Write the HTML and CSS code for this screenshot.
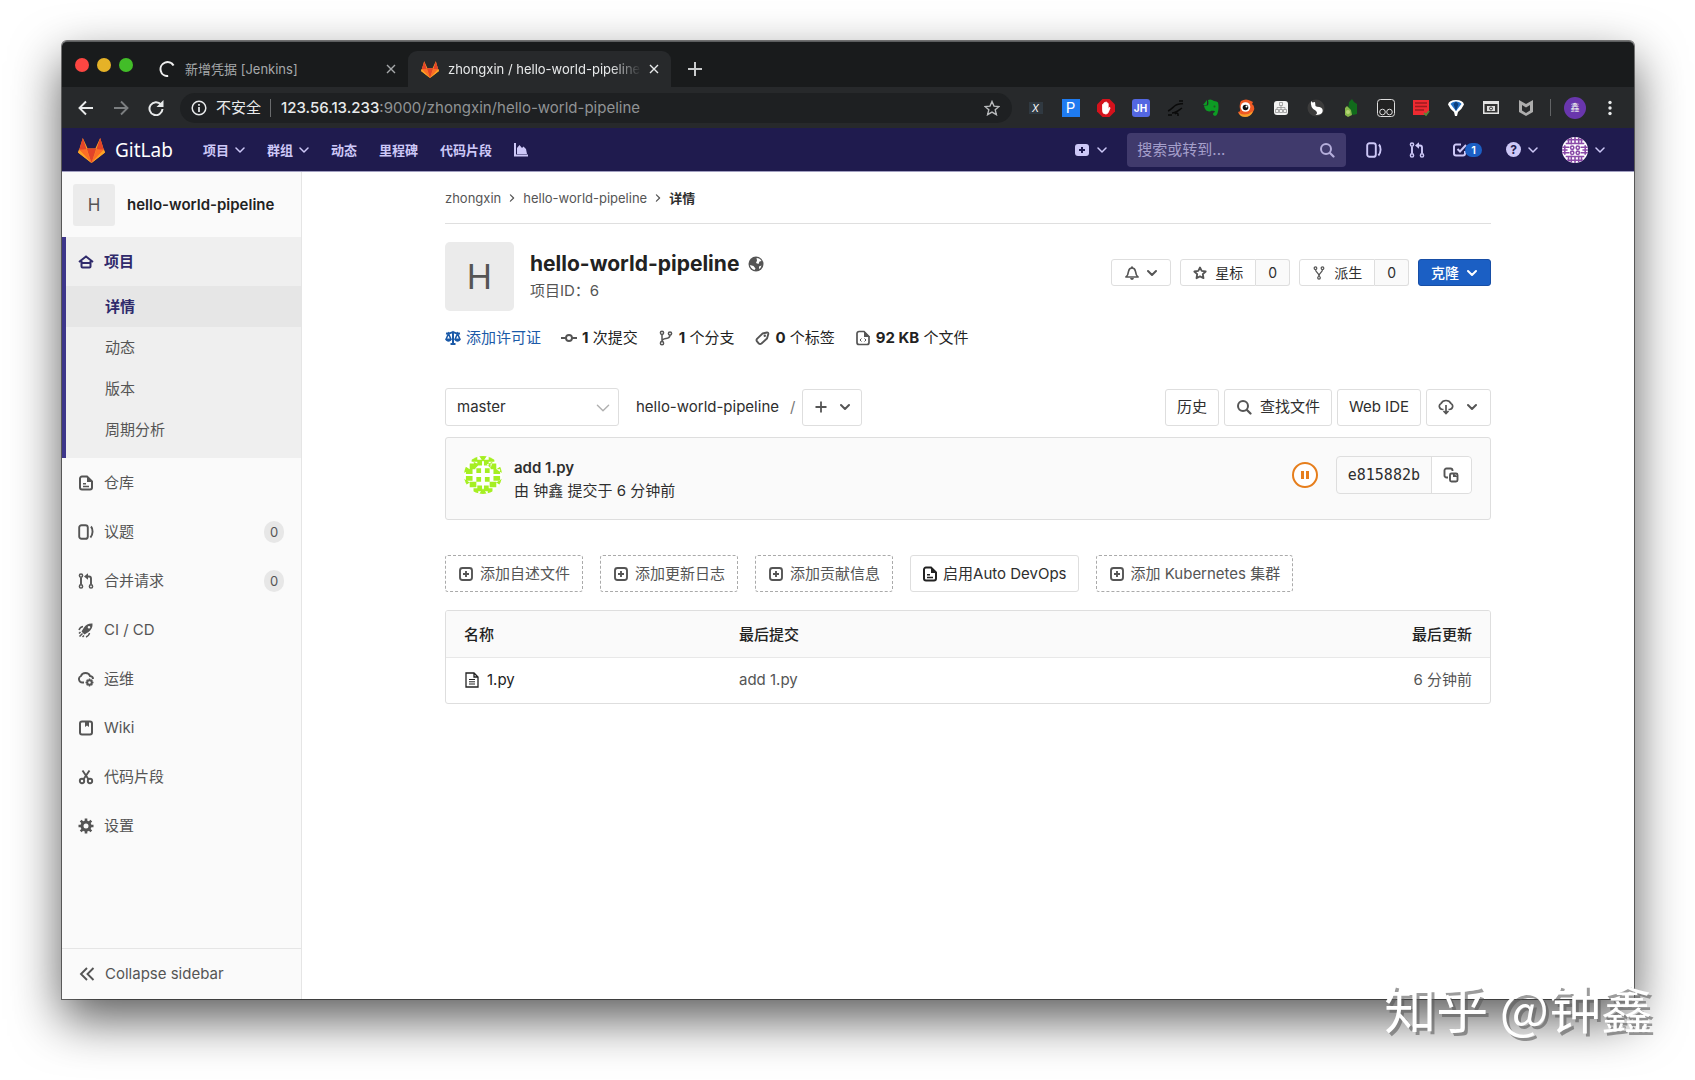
FILE: index.html
```html
<!DOCTYPE html>
<html lang="zh-CN">
<head>
    <meta charset="UTF-8">
    <meta name="viewport" content="width=device-width, initial-scale=1.0">
    <title>zhongxin / hello-world-pipeline</title>
    <link rel="stylesheet" href="styles.css">
</head>
<body>

<!-- Shared icons -->
<svg class="sprite" aria-hidden="true">
    <symbol id="chevron" viewBox="0 0 10 10"><path d="M1 3l4 4 4-4" fill="none" stroke="currentColor" stroke-linecap="round" stroke-linejoin="round"/></symbol>
    <symbol id="close" viewBox="0 0 10 10"><path d="M1 1l8 8M9 1l-8 8" fill="none" stroke="currentColor" stroke-width="1.4"/></symbol>
    <symbol id="tanuki" viewBox="0 0 28 28">
        <path d="M1 15L5 2l5 11h8l5-11 4 13 1 2-14 11L0 17z" fill="#fca326"/>
        <path d="M1 15L5 2l4 12zM27 15L23 2l-4 12z" fill="#e24329"/>
        <path d="M1 14h8l5 14zM27 14h-8l-5 14z" fill="#fc6d26"/>
        <path d="M0 17l1-3 13 14zM28 17l-1-3-13 14z" fill="#fca326"/>
        <path d="M9 13h10l-5 15z" fill="#e24329"/>
    </symbol>
    <symbol id="issues" viewBox="0 0 16 16"><rect x="1.2" y="1.2" width="8.600" height="13.600" rx="2.400" fill="none" stroke="currentColor" stroke-width="1.900"/><path d="M13 2.500c2.200 2.500 2.200 8-.6 11" fill="none" stroke="currentColor" stroke-width="1.900"/></symbol>
    <symbol id="merge" viewBox="0 0 16 16"><g fill="none" stroke="currentColor" stroke-width="1.5"><circle cx="3" cy="2.600" r="1.600"/><circle cx="3" cy="13.400" r="1.600"/><circle cx="13" cy="13.400" r="1.600"/></g><path d="M3 4.500v7M13 11.500V5.500q0-2-2-2H8" fill="none" stroke="currentColor" stroke-width="1.900"/><path d="M6 3.500L10 .3v6.400z" fill="currentColor"/></symbol>
    <symbol id="doc" viewBox="0 0 16 16"><path d="M4 1.500h5l5 5V12.500a2 2 0 0 1-2 2H4a2 2 0 0 1-2-2v-9a2 2 0 0 1 2-2z" fill="none" stroke="currentColor" stroke-width="2"/><path d="M9 1l6 6H9zM5 8h3v1.400H5zM5 10.800h6v1.400H5z" fill="currentColor"/></symbol>
    <symbol id="plus-square" viewBox="0 0 16 16"><rect x="2" y="2" width="12" height="12" rx="2.500" fill="none" stroke="currentColor" stroke-width="1.900"/><path d="M8 5v6M5 8h6" stroke="currentColor" stroke-width="1.900"/></symbol>
    <symbol id="search" viewBox="0 0 16 16"><circle cx="7" cy="7" r="5" fill="none" stroke="currentColor" stroke-width="2"/><path d="M11 11l3.500 3.500" stroke="currentColor" stroke-width="2.200" stroke-linecap="round"/></symbol>
    <symbol id="scissors" viewBox="0 0 16 16"><g fill="none" stroke="currentColor" stroke-width="1.900"><circle cx="4" cy="12" r="2.200"/><circle cx="12" cy="12" r="2.200"/><path d="M4.500 1.500l6 8.800M11.500 1.500l-6 8.800"/></g></symbol>
    <symbol id="fork" viewBox="0 0 16 16"><g fill="none" stroke="currentColor" stroke-width="1.400"><circle cx="4" cy="2.500" r="1.500"/><circle cx="12" cy="2.500" r="1.500"/><circle cx="8" cy="13.500" r="1.500"/><path d="M4 4c0 4 4 3 4 8M12 4c0 4-4 3-4 8"/></g></symbol>
    <symbol id="identicon" viewBox="0 0 40 40">
        <path fill="currentColor" d="M8 0h6v6H8zM16 0l4 6 4-6zM26 0h6v6h-6zM6 8h6v6H6zM14 4h5v6h-5zM21 4h5v6h-5zM28 8h6v6h-6zM0 10l6 4-6 4zM40 10l-6 4 6 4zM2 14h7v5H2zM31 14h7v5h-7zM2 21h7v5H2zM31 21h7v5h-7zM0 24l6 4-6 4zM40 24l-6 4 6 4zM6 27h7v6H6zM27 27h7v6h-7zM14 31h5v6h-5zM21 31h5v6h-5zM10 34h5v6h-5zM25 34h5v6h-5zM16 40l4-6 4 6zM10 6l6 3-4 4zM30 6l-6 3 4 4zM13 13h5v5h-5zM22 13h5v5h-5zM13 22h5v5h-5zM22 22h5v5h-5z"/>
    </symbol>
    <symbol id="identicon-user" viewBox="0 0 28 28">
        <g fill="none" stroke="currentColor" stroke-width="1.700">
            <path d="M7 1v6M10 0v8M14 0v7M18 0v8M21 1v6M5 3h18M4 7h20M7 21v6M10 20v8M14 21v7M18 20v8M21 21v6M5 25h18M4 21h20M3 9v10M0 11h8M0 14h6M0 17h8M25 9v10M20 11h8M22 14h6M20 17h8"/>
            <circle cx="11" cy="11.500" r="1.800"/><circle cx="17" cy="11.500" r="1.800"/><circle cx="11" cy="17" r="1.800"/><circle cx="17" cy="17" r="1.800"/>
        </g>
    </symbol>
</svg>

<div class="window">

    <!-- Browser tabs -->
    <div class="tabs">
        <div class="lights"><i class="red"></i><i class="yellow"></i><i class="green"></i></div>
        <div class="tab">
            <svg class="i16" viewBox="0 0 16 16"><path d="M11.500 14.200A7 7 0 1 1 13 2.500" transform="rotate(20 8 8)" fill="none" stroke="#eee" stroke-width="2"/></svg>
            <span class="tab-title">新增凭据 [Jenkins]</span>
            <button class="tab-close" aria-label="关闭"><svg class="i10"><use href="#close"/></svg></button>
        </div>
        <div class="tab active">
            <svg class="i18"><use href="#tanuki"/></svg>
            <span class="tab-title">zhongxin / hello-world-pipeline</span>
            <button class="tab-close" aria-label="关闭"><svg class="i10"><use href="#close"/></svg></button>
        </div>
        <button class="new-tab" aria-label="新标签页"><svg class="i14" viewBox="0 0 14 14"><path d="M7 0v14M0 7h14" stroke="currentColor" stroke-width="2"/></svg></button>
    </div>

    <!-- Address bar -->
    <div class="toolbar">
        <div class="history">
            <button aria-label="后退"><svg class="i16" viewBox="0 0 16 16"><path d="M15 8H2M8 1.500L1.500 8 8 14.500" fill="none" stroke="currentColor" stroke-width="1.900"/></svg></button>
            <button class="disabled" aria-label="前进"><svg class="i16" viewBox="0 0 16 16"><path d="M1 8h13M8 1.500L14.500 8 8 14.500" fill="none" stroke="currentColor" stroke-width="1.900"/></svg></button>
            <button aria-label="重新加载"><svg class="i16" viewBox="0 0 16 16"><path d="M13 4.500A6.500 6.500 0 1 0 14.500 9" fill="none" stroke="currentColor" stroke-width="2"/><path d="M15.500 0v7h-7z" fill="currentColor"/></svg></button>
        </div>
        <div class="omnibox">
            <svg class="i16" viewBox="0 0 16 16"><circle cx="8" cy="8" r="6.800" fill="none" stroke="currentColor" stroke-width="1.500"/><path d="M8 7v5M8 4v1.700" stroke="currentColor" stroke-width="1.700"/></svg>
            <span class="insecure">不安全</span>
            <span class="url"><b>123.56.13.233</b>:9000/zhongxin/hello-world-pipeline</span>
            <svg class="i16 bookmark" viewBox="0 0 16 16"><path d="M8 1.500l2 4.600 5 .4-3.800 3.300 1.200 4.900L8 12.100l-4.400 2.600 1.200-4.900L1 6.500l5-.4z" fill="none" stroke="currentColor" stroke-width="1.400"/></svg>
        </div>
        <div class="extensions">
            <span class="ext"><i class="ext-x">X</i></span>
            <span class="ext"><i class="ext-p">P</i></span>
            <span class="ext"><svg class="i18" viewBox="0 0 18 18"><path d="M5.500 0h7L18 5.500v7L12.500 18h-7L0 12.500v-7z" fill="#d4121c"/><path d="M5.500 8V5.500q.8-.8 1.300 0V4q.8-.9 1.500 0v-.700q.8-.8 1.500 0V4.500q.8-.8 1.400 0V9.500l1-1q1-.3.800.7l-1.700 4q-.7 1.800-2.500 1.800-3.300 0-3.300-3.500z" fill="#fff" stroke="#fff" stroke-width=".8"/></svg></span>
            <span class="ext"><i class="ext-jh">JH</i></span>
            <span class="ext"><svg class="i18" viewBox="0 0 18 18"><path d="M1 12c3-1 5-4 8-6 3-1.500 5-1 7-1.500M5 14c4 0 7-3 10-5M12 2h4M1 16h4M8 15q2-2 3 0v2" fill="none" stroke="#0a0a0a" stroke-width="1.500"/></svg></span>
            <span class="ext"><svg class="i18" viewBox="0 0 18 18"><path d="M1 6l4-5v4q0 1-1 1zM6 1q3-1.500 6 1 3 0 4 1.500c1 4 .5 9-1 12-1 2-4 1.500-4-.5 0-1.500 2-2 2-2 .2-1.500-2-.5-3-1.500-3 2-7 1-8-5h3.500Q7 6 6 1z" fill="#0d9b24"/><circle cx="12.500" cy="7.500" r="1" fill="#245427"/></svg></span>
            <span class="ext"><svg class="i18" viewBox="0 0 18 18"><path d="M4 2q5-3 10 0l2 1-1 2q3 2 2 6-3 7-9 6-6 0-7-4 3 0 2-3-1-5 1-8z" fill="#ef5a24"/><circle cx="8.500" cy="8" r="4.800" fill="#fff"/><circle cx="8.500" cy="8.500" r="2.800" fill="#111"/><circle cx="9.500" cy="7.500" r="1" fill="#fff"/><path d="M2 14q7 4 14-2-2 6-8 6-5 0-6-4z" fill="#f7a02a"/></svg></span>
            <span class="ext"><svg class="i14" viewBox="0 0 14 14"><rect width="14" height="14" rx="3" fill="#f2f2f2"/><path d="M5.500 1.500h3v3h-3zM7 4.500v4M3 8.500V6.500h8v2M1.500 8.500h3v3h-3zM5.500 8.500h3v3h-3zM9.500 8.500h3v3h-3z" fill="none" stroke="#888" stroke-width=".7"/></svg></span>
            <span class="ext"><svg class="i18" viewBox="0 0 18 18"><circle cx="9" cy="9" r="8.500" fill="#3c3c3c"/><path d="M4 2l1.500 1.500L8 3l.5 4q1 1 4 1 4 1 3 5-1 3-7 3 3-2 0-4.500Q3 9 4 2z" fill="#fff"/></svg></span>
            <span class="ext"><svg class="i18" viewBox="0 0 18 18"><path d="M7 3l3-3 2 3 3 2v10l-4 1-5-5z" fill="#116b1c"/><path d="M3 9l2-2 4 4 1 5-4 2-3-2z" fill="#86b84b"/><circle cx="6" cy="13" r="2" fill="#b7d576"/></svg></span>
            <span class="ext"><svg class="i18" viewBox="0 0 18 18"><rect x=".5" y=".5" width="17" height="17" rx="3" fill="#222" stroke="#ddd"/><circle cx="5.500" cy="13" r="2.800" fill="none" stroke="#ddd"/><circle cx="12.500" cy="13" r="2.800" fill="none" stroke="#ddd"/></svg></span>
            <span class="ext"><svg class="i18" viewBox="0 0 18 18"><path d="M1 1h16v11l-4 4H1z" fill="#ee2a31"/><path d="M3 4h12M3 7.500h12M3 11h9" stroke="#9c1b1f" stroke-width="1.300"/><path d="M12 14l2 2 3-4" fill="none" stroke="#59883a" stroke-width="1.800"/></svg></span>
            <span class="ext"><svg class="i18" viewBox="0 0 18 18"><path d="M9 1q7 0 8 4.500Q15 10 11 13l-1 4H8l-1-4Q3 10 1 5.500 2 1 9 1z" fill="#fff"/><path d="M9 2.500q4 0 5.500 2.500L9 12 3.500 5Q5 2.500 9 2.500z" fill="#2373c9"/><path d="M9 2.500L6.500 5 9 12l2.500-7z" fill="#0c3f7c"/></svg></span>
            <span class="ext"><svg class="i16" viewBox="0 0 16 16"><path d="M0 1h16v13H0z" fill="#e3e3e3"/><path d="M1.500 4h13v8.500h-13z" fill="#333"/><path d="M4 6h8v5H4z" fill="#ddd"/><circle cx="8" cy="8.500" r="1.500" fill="none" stroke="#333"/></svg></span>
            <span class="ext"><svg class="i18" viewBox="0 0 18 18"><path d="M2 1l7 4 7-4v12l-7 4-7-4zM5 6v5.500L9 14l4-2.500V6L9 8.500z" fill="#adadad" fill-rule="evenodd"/></svg></span>
        </div>
        <span class="divider"></span>
        <span class="profile">鑫</span>
        <button class="menu" aria-label="菜单"><svg class="i16" viewBox="0 0 16 16"><circle cx="8" cy="2.500" r="1.700"/><circle cx="8" cy="8" r="1.700"/><circle cx="8" cy="13.500" r="1.700"/></svg></button>
    </div>

    <!-- GitLab header -->
    <header>
        <a class="brand" href="#"><svg class="i26"><use href="#tanuki"/></svg>GitLab</a>
        <nav class="main-nav">
            <a href="#">项目<svg class="i10"><use href="#chevron"/></svg></a>
            <a href="#">群组<svg class="i10"><use href="#chevron"/></svg></a>
            <a href="#">动态</a>
            <a href="#">里程碑</a>
            <a href="#">代码片段</a>
            <a href="#" aria-label="统计"><svg class="i14" viewBox="0 0 14 14"><path d="M1 0v12.500h13" fill="none" stroke="currentColor" stroke-width="2"/><path d="M3 11V5l2.500-3L8 5l1.500-1.500L12 6l1 5z" fill="currentColor"/></svg></a>
        </nav>
        <div class="tools">
            <a class="new-item" href="#" aria-label="新建"><svg class="i14" viewBox="0 0 14 14"><rect y="1" width="14" height="12" rx="3" fill="currentColor"/><path d="M7 4v6M4 7h6" stroke="#1f1b4e" stroke-width="2"/></svg><svg class="i10"><use href="#chevron"/></svg></a>
            <form class="search">
                <input type="text" placeholder="搜索或转到..." aria-label="搜索或转到">
                <svg class="i16"><use href="#search"/></svg>
            </form>
            <div class="user-tools">
                <a class="shortcut" href="#" aria-label="议题"><svg class="i16"><use href="#issues"/></svg></a>
                <a class="shortcut" href="#" aria-label="合并请求"><svg class="i16"><use href="#merge"/></svg></a>
                <a class="todos" href="#" aria-label="待办事项"><svg class="i16" viewBox="0 0 16 16"><path d="M9 2.500H4a2 2 0 0 0-2 2v7a2 2 0 0 0 2 2h7a2 2 0 0 0 2-2V9" fill="none" stroke="currentColor" stroke-width="2"/><path d="M5.500 7l2.500 2.500 6-6.500" fill="none" stroke="currentColor" stroke-width="2"/></svg><span class="todo-count">1</span></a>
                <a class="help" href="#" aria-label="帮助"><i class="question">?</i><svg class="i10"><use href="#chevron"/></svg></a>
                <a class="user" href="#" aria-label="用户"><svg class="user-avatar"><use href="#identicon-user"/></svg><svg class="i10"><use href="#chevron"/></svg></a>
            </div>
        </div>
    </header>

    <div class="page">
        <aside class="sidebar">
            <a class="context" href="#"><span class="avatar small">H</span>hello-world-pipeline</a>
            <ul class="side-nav">
                <li class="active">
                    <a href="#"><svg class="i16" viewBox="0 0 16 16"><path d="M1 8l7-5.500L15 8M3.500 7v5.500a1 1 0 0 0 1 1h7a1 1 0 0 0 1-1V7M4 9h8" fill="none" stroke="currentColor" stroke-width="2"/></svg>项目</a>
                    <ul class="sub-nav">
                        <li class="current"><a href="#">详情</a></li>
                        <li><a href="#">动态</a></li>
                        <li><a href="#">版本</a></li>
                        <li><a href="#">周期分析</a></li>
                    </ul>
                </li>
                <li><a href="#"><svg class="i16"><use href="#doc"/></svg>仓库</a></li>
                <li><a href="#"><svg class="i16"><use href="#issues"/></svg>议题<span class="count">0</span></a></li>
                <li><a href="#"><svg class="i16"><use href="#merge"/></svg>合并请求<span class="count">0</span></a></li>
                <li><a href="#"><svg class="i16" viewBox="0 0 16 16"><path d="M14.500 1.500Q9 1 6 5.500L3.500 9.500l3 3L10.500 10Q15 7 14.500 1.500zM11 4a1.300 1.300 0 1 1 0 2.600A1.300 1.300 0 0 1 11 4z" fill="currentColor" fill-rule="evenodd"/><path d="M5 4.500Q2 5 1 8M11.500 11Q11 14 8 15M1.500 14.500l3-3M1 11.500L2.500 10M4.500 15L6 13.500" fill="none" stroke="currentColor" stroke-width="1.500"/></svg>CI / CD</a></li>
                <li><a href="#"><svg class="i16" viewBox="0 0 16 16"><path d="M6 11.500H4.500A3.400 3.400 0 0 1 3 5q1-3 4.500-3T12 5q3 .3 3 3" fill="none" stroke="currentColor" stroke-width="1.900"/><circle cx="11.500" cy="11.500" r="2.300" fill="none" stroke="currentColor" stroke-width="2"/><path d="M11.500 7.500v2M11.500 13.500v2M7.500 11.500h2M13.500 11.500h2M8.700 8.700l1.500 1.500M12.800 12.800l1.500 1.500M14.300 8.700l-1.500 1.500M10.200 12.800l-1.500 1.500" stroke="currentColor" stroke-width="1.400"/></svg>运维</a></li>
                <li><a href="#"><svg class="i16" viewBox="0 0 16 16"><rect x="2" y="1.500" width="12" height="13" rx="2" fill="none" stroke="currentColor" stroke-width="2"/><path d="M7 1h4v6L9 5.500 7 7z" fill="currentColor"/></svg>Wiki</a></li>
                <li><a href="#"><svg class="i16"><use href="#scissors"/></svg>代码片段</a></li>
                <li><a href="#"><svg class="i16" viewBox="0 0 16 16"><circle cx="8" cy="8" r="4" fill="none" stroke="currentColor" stroke-width="3"/><path d="M8 .5V4M8 12v3.500M.5 8H4M12 8h3.500M2.700 2.700l2.500 2.500M10.800 10.800l2.500 2.500M13.300 2.700l-2.500 2.500M5.200 10.800l-2.500 2.500" stroke="currentColor" stroke-width="2.600"/></svg>设置</a></li>
            </ul>
            <button class="collapse"><svg class="i16" viewBox="0 0 16 16"><path d="M8 2L2 8l6 6M14.500 2l-6 6 6 6" fill="none" stroke="currentColor" stroke-width="1.900"/></svg>Collapse sidebar</button>
        </aside>

        <main>
            <div class="container">
                <div class="breadcrumbs">
                    <a href="#">zhongxin</a><svg class="crumb"><use href="#chevron"/></svg><a href="#">hello-world-pipeline</a><svg class="crumb"><use href="#chevron"/></svg><b>详情</b>
                </div>

                <div class="project">
                    <span class="avatar large">H</span>
                    <div class="project-info">
                        <h1>hello-world-pipeline <svg class="i16" viewBox="0 0 16 16"><circle cx="8" cy="8" r="7.500" fill="#555"/><path d="M8.500 2q3.500 0 5 3l-2 .5-1 2.500-2.500-1L9 4.500zM2 9l3.500 1 2 2.500L6.500 14Q2.500 12.500 2 9zM11 10.500l2.500-1q-.5 2.500-2.500 3.500z" fill="#fff"/></svg></h1>
                        <p>项目ID：6</p>
                    </div>
                    <div class="project-buttons">
                        <button class="btn short" aria-label="通知设置"><svg class="i14" viewBox="0 0 14 14"><path d="M1 11h12q-2-1.500-2.500-5.500Q10 2 7 2T3.500 5.500Q3 9.500 1 11z" fill="none" stroke="currentColor" stroke-width="1.700" stroke-linejoin="round"/><path d="M6 .5h2V2H6zM5 12h4q-.5 2-2 2t-2-2z" fill="currentColor"/></svg><svg class="i10 bold"><use href="#chevron"/></svg></button>
                        <div class="btn-group">
                            <button class="btn short"><svg class="i14" viewBox="0 0 14 14"><path d="M7 1.500l1.700 3.400 4 .6-2.900 2.700.7 4L7 10.400 3.500 12.200l.7-4L1.300 5.500l4-.6z" fill="none" stroke="currentColor" stroke-width="1.800" stroke-linejoin="round"/></svg>星标</button><a class="btn short num" href="#">0</a>
                        </div>
                        <div class="btn-group">
                            <button class="btn short"><svg class="i14"><use href="#fork"/></svg>派生</button><a class="btn short num" href="#">0</a>
                        </div>
                        <button class="btn short primary">克隆<svg class="i10 bold"><use href="#chevron"/></svg></button>
                    </div>
                </div>

                <ul class="stats">
                    <li><a class="blue" href="#"><svg class="i16" viewBox="0 0 16 16"><path d="M1 3.500q3.500.5 7-1.500 3.500 2 7 1.500M8 2v12M5.500 14h5" fill="none" stroke="currentColor" stroke-width="2"/><path d="M3.500 3.500L1 9.500q2.500 2.500 5 0zM12.500 3.500L10 9.500q2.500 2.500 5 0z" fill="none" stroke="currentColor" stroke-width="1.600"/><path d="M.8 8.500h5.400q-.5 3-2.700 3T.8 8.500zM9.800 8.500h5.400q-.5 3-2.700 3t-2.700-3z" fill="currentColor"/></svg>添加许可证</a></li>
                    <li><a href="#"><svg class="i16" viewBox="0 0 16 16"><circle cx="8" cy="8" r="3" fill="none" stroke="currentColor" stroke-width="1.900"/><path d="M0 8h5M11 8h5" stroke="currentColor" stroke-width="2"/></svg><span><b>1</b> 次提交</span></a></li>
                    <li><a href="#"><svg class="i16" viewBox="0 0 16 16"><g fill="none" stroke="currentColor" stroke-width="1.500"><circle cx="4" cy="2.800" r="1.600"/><circle cx="12" cy="3.500" r="1.600"/><circle cx="4" cy="13.200" r="1.600"/><path d="M4 4.500v7M12 5q0 3-4 3.500-4 .5-4 3"/></g></svg><span><b>1</b> 个分支</span></a></li>
                    <li><a href="#"><svg class="i16" viewBox="0 0 16 16"><path d="M8.500 3.500L13 2.500q1.500 0 1.300 1.500L13 8.500 7.500 13.500q-1.500 1-2.700 0L3 11.500q-1-1.500 0-2.700z" fill="none" stroke="currentColor" stroke-width="1.900"/><circle cx="10.800" cy="5.800" r="1.200" fill="currentColor"/></svg><span><b>0</b> 个标签</span></a></li>
                    <li><a href="#"><svg class="i16" viewBox="0 0 16 16"><path d="M4 1.500h5l5 5v6a2 2 0 0 1-2 2H4a2 2 0 0 1-2-2v-9a2 2 0 0 1 2-2z" fill="none" stroke="currentColor" stroke-width="1.700"/><path d="M9 1l6 6H9z" fill="currentColor"/><path d="M6.500 8.500L5 10l1.500 1.500M9.500 8.500L11 10l-1.500 1.500" fill="none" stroke="currentColor"/></svg><span><b>92 KB</b> 个文件</span></a></li>
                </ul>

                <div class="tree-controls">
                    <div class="ref">
                        <select aria-label="分支"><option>master</option></select>
                        <svg class="i14"><use href="#chevron"/></svg>
                    </div>
                    <a class="path" href="#">hello-world-pipeline</a>
                    <span class="slash">/</span>
                    <button class="btn add" aria-label="添加"><svg class="i14" viewBox="0 0 14 14"><path d="M7 1.500v11M1.500 7h11" stroke="currentColor" stroke-width="1.800"/></svg><svg class="i10 bold"><use href="#chevron"/></svg></button>
                    <div class="tree-actions">
                        <a class="btn" href="#">历史</a>
                        <a class="btn find" href="#"><svg class="i16"><use href="#search"/></svg>查找文件</a>
                        <a class="btn" href="#">Web IDE</a>
                        <button class="btn download" aria-label="下载"><svg class="i16" viewBox="0 0 16 16"><path d="M5.500 10.500H4.500A3.200 3.200 0 0 1 3 4.500Q4.500 1.500 8 1.500t5 3a3.200 3.200 0 0 1-1.500 6h-1M8 6v8M5.500 12L8 14.500l2.500-2.500" fill="none" stroke="currentColor" stroke-width="1.700"/></svg><svg class="i10 bold"><use href="#chevron"/></svg></button>
                    </div>
                </div>

                <div class="commit">
                    <svg class="commit-avatar"><use href="#identicon"/></svg>
                    <div class="commit-text">
                        <a class="commit-title" href="#">add 1.py</a>
                        <p>由 钟鑫 提交于 6 分钟前</p>
                    </div>
                    <a class="pending" href="#" aria-label="等待中"><svg viewBox="0 0 26 26"><circle cx="13" cy="13" r="12" fill="#fff" stroke="#e67e1c" stroke-width="2"/><path d="M9 9h3v8H9zM14 9h3v8h-3z" fill="#e67e1c"/></svg></a>
                    <div class="sha">
                        <code>e815882b</code>
                        <button aria-label="复制"><svg class="i16" viewBox="0 0 16 16"><path d="M5 10.500H3.500a2 2 0 0 1-2-2v-5a2 2 0 0 1 2-2h4a2 2 0 0 1 2 2V4" fill="none" stroke="currentColor" stroke-width="1.900"/><rect x="7" y="6.500" width="7.500" height="8" rx="1.500" fill="none" stroke="currentColor" stroke-width="1.900"/><path d="M10 6l5 4h-5z" fill="currentColor"/></svg></button>
                    </div>
                </div>

                <div class="quick-links">
                    <a class="btn dashed" href="#"><svg class="i16"><use href="#plus-square"/></svg>添加自述文件</a>
                    <a class="btn dashed" href="#"><svg class="i16"><use href="#plus-square"/></svg>添加更新日志</a>
                    <a class="btn dashed" href="#"><svg class="i16"><use href="#plus-square"/></svg>添加贡献信息</a>
                    <a class="btn devops" href="#"><svg class="i16"><use href="#doc"/></svg>启用Auto DevOps</a>
                    <a class="btn dashed" href="#"><svg class="i16"><use href="#plus-square"/></svg>添加 Kubernetes 集群</a>
                </div>

                <div class="files">
                    <table>
                        <thead>
                            <tr><th class="name">名称</th><th>最后提交</th><th class="updated">最后更新</th></tr>
                        </thead>
                        <tbody>
                            <tr>
                                <td><a class="file" href="#"><svg class="i16" viewBox="0 0 16 16"><path d="M2 1h8l4 4v10H2zM10 1v4h4" fill="none" stroke="currentColor" stroke-width="1.300"/><path d="M5 7.500h6M5 9.800h6M5 12h6" stroke="currentColor"/></svg>1.py</a></td>
                                <td>add 1.py</td>
                                <td class="updated">6 分钟前</td>
                            </tr>
                        </tbody>
                    </table>
                </div>
            </div>
        </main>
    </div>
</div>

<div class="watermark">知乎 @钟鑫</div>

</body>
</html>
```
FILE: styles.css
```css
* {
    box-sizing: border-box;
}

body {
    margin: 0;
    min-height: 100vh;
    padding: 41px 61px 81px 62px;
    display: flex;
    position: relative;
    background-color: #fff;
    color: #2e2e2e;
    font-family: Inter, "Noto Sans CJK SC", sans-serif;
    font-size: 15px;
    line-height: 20px;
}

a {
    color: inherit;
    text-decoration: none;
}

button {
    font: inherit;
    color: inherit;
    background: none;
    border: none;
    padding: 0;
    cursor: pointer;
}

ul, p, h1 {
    margin: 0;
    padding: 0;
    list-style: none;
}

i {
    font-style: normal;
}

svg {
    flex: none;
    display: block;
}

.sprite {
    display: none;
}

.i10 { width: 10px; height: 10px; stroke-width: 1.5; }
.i14 { width: 14px; height: 14px; }
.i16 { width: 16px; height: 16px; }
.i18 { width: 18px; height: 18px; }
.i26 { width: 27px; height: 27px; }

.i10.bold {
    stroke-width: 2;
}

.window {
    flex: 1;
    display: flex;
    flex-direction: column;
    background-color: #fff;
    border-radius: 5px 5px 0 0;
    box-shadow: 0 0 0 1px rgba(0, 0, 0, 0.5), 0 20px 50px rgba(0, 0, 0, 0.65);
}

/* Browser tabs */
.tabs {
    display: flex;
    align-items: flex-end;
    height: 46px;
    background-color: #191b1c;
    border-top: 1px solid #5c5e5f;
    border-radius: 5px 5px 0 0;
    color: #a6a9ab;
    font-size: 13px;
}

.lights {
    display: flex;
    gap: 8px;
    padding: 0 12px 15px 13px;
}

.lights i {
    width: 14px;
    height: 14px;
    border-radius: 50%;
}

.red { background-color: #fc4642; }
.yellow { background-color: #e5b227; }
.green { background-color: #42bd28; }

.tab {
    display: flex;
    align-items: center;
    width: 263px;
    height: 36px;
    padding: 0 12px 0 13px;
    border-radius: 9px 9px 0 0;
}

.tab .i16 {
    margin: 0 1px;
}

.tab.active {
    background-color: #27292b;
    color: #e8eaeb;
}

.tab-title {
    flex: 1;
    overflow: hidden;
    white-space: nowrap;
    padding-left: 9px;
    margin-right: 8px;
}

.active .tab-title {
    -webkit-mask-image: linear-gradient(to right, #000 85%, transparent);
    mask-image: linear-gradient(to right, #000 85%, transparent);
}

.new-tab {
    padding: 11px 17px;
    color: #c9cbcc;
}

/* Address bar */
.toolbar {
    display: flex;
    align-items: center;
    height: 41px;
    background-color: #27292b;
    color: #e8eaeb;
}

.history {
    display: flex;
    gap: 19px;
    padding: 0 16px;
}

.disabled {
    color: #7b7e80;
}

.omnibox {
    flex: 1;
    display: flex;
    align-items: center;
    height: 30px;
    padding: 0 12px 0 11px;
    border-radius: 15px;
    background-color: #1e2022;
}

.insecure {
    padding: 0 9px;
    border-right: 1px solid #6a6c6e;
    line-height: 18px;
}

.url {
    flex: 1;
    padding-left: 10px;
    color: #909395;
}

.url b {
    color: #e8eaeb;
    font-weight: 500;
}

.bookmark {
    color: #b9bbbd;
}

.extensions {
    display: flex;
    padding: 0 7px 0 6px;
}

.ext {
    width: 35px;
    display: flex;
    justify-content: center;
    align-items: center;
    color: #fff;
}

.ext i {
    width: 18px;
    height: 18px;
    line-height: 18px;
    text-align: center;
}

.ext .ext-x {
    width: 14px;
    height: 12px;
    background-color: #303941;
    font-size: 10px;
    font-style: italic;
    line-height: 12px;
}

.ext-p {
    background-color: #1f7bf0;
    font-size: 15px;
}

.ext-jh {
    background-color: #5367e2;
    border-radius: 3px;
    font-size: 10px;
    font-weight: 700;
}

.divider {
    width: 1px;
    height: 17px;
    background-color: #626466;
}

.profile {
    width: 22px;
    height: 22px;
    margin: 0 16px 0 13px;
    border-radius: 50%;
    background-color: #6936ad;
    font-size: 9px;
    line-height: 22px;
    text-align: center;
}

.menu {
    margin-right: 16px;
    fill: currentColor;
}

/* GitLab header */
header {
    display: flex;
    align-items: center;
    height: 44px;
    padding: 0 29px 0 16px;
    background-color: #1f1b4e;
    border-bottom: 1px solid #a19fc0;
    color: #cdc8f7;
    font-size: 13px;
}

.brand {
    display: flex;
    align-items: center;
    gap: 10px;
    margin-right: 30px;
    color: #fff;
    font-family: "Noto Sans", sans-serif;
    font-size: 19px;
}

.main-nav {
    display: flex;
    gap: 22px;
    font-weight: 700;
}

.main-nav a,
.tools,
.user-tools,
.user-tools a,
.new-item {
    display: flex;
    align-items: center;
}

.main-nav a {
    gap: 6px;
}

.tools {
    flex: 1;
    justify-content: flex-end;
}

.new-item {
    gap: 8px;
    margin-right: 20px;
}

.search {
    display: flex;
    align-items: center;
    width: 219px;
    height: 34px;
    padding: 0 11px 0 10px;
    border-radius: 4px;
    background-color: #403a6c;
    color: #b5aedb;
}

.search input {
    flex: 1;
    min-width: 0;
    padding: 0;
    border: none;
    outline: none;
    background: none;
    color: inherit;
    font: inherit;
    font-size: 15px;
}

.search input::placeholder {
    color: #a59fcb;
}

.user-tools {
    gap: 24px;
    margin-left: 20px;
}

.shortcut {
    margin-right: 3px;
}

.todo-count {
    margin-left: -3px;
    padding: 0 6px;
    border-radius: 8px;
    background-color: #1b5fc4;
    color: #fff;
    font-size: 11px;
    font-weight: 600;
    line-height: 14px;
}

.help,
.user {
    gap: 7px;
}

.question {
    width: 15px;
    height: 15px;
    border-radius: 50%;
    background-color: #cdc8f7;
    color: #1f1b4e;
    font-size: 12px;
    font-weight: 700;
    line-height: 15px;
    text-align: center;
}

.user-avatar {
    width: 26px;
    height: 26px;
    border-radius: 50%;
    background-color: #fff;
    color: #8a4aa8;
}

/* Page */
.page {
    flex: 1;
    display: flex;
}

.sidebar {
    width: 240px;
    display: flex;
    flex-direction: column;
    background-color: #fafafa;
    border-right: 1px solid #e5e5e5;
    color: #555;
}

.context {
    display: flex;
    align-items: center;
    gap: 12px;
    height: 65px;
    padding-left: 11px;
    color: #222;
    font-weight: 600;
}

.avatar {
    display: flex;
    align-items: center;
    justify-content: center;
    background-color: #ebebeb;
    color: #555;
    font-weight: 400;
}

.avatar.small {
    width: 42px;
    height: 42px;
    border-radius: 3px;
    font-size: 17px;
}

.avatar.large {
    width: 69px;
    height: 69px;
    border-radius: 5px;
    font-size: 34px;
}

.side-nav {
    flex: 1;
}

.side-nav > li > a {
    display: flex;
    align-items: center;
    gap: 10px;
    height: 49px;
    padding: 0 17px 0 16px;
}

.side-nav > .active {
    border-left: 4px solid #3d368a;
    background-color: #efefef;
    padding-bottom: 8px;
}

.side-nav > .active > a {
    padding-left: 12px;
    color: #2f2a6b;
    font-weight: 700;
}

.sub-nav a {
    display: block;
    height: 41px;
    padding-left: 39px;
    line-height: 41px;
}

.sub-nav .current {
    background-color: #e6e6e6;
    color: #2f2a6b;
    font-weight: 700;
}

.count {
    margin-left: auto;
    min-width: 20px;
    border-radius: 11px;
    background-color: #e7e7e7;
    font-size: 13px;
    line-height: 22px;
    text-align: center;
}

.collapse {
    display: flex;
    align-items: center;
    gap: 10px;
    height: 51px;
    padding-left: 17px;
    border-top: 1px solid #e5e5e5;
}

main {
    flex: 1;
    padding: 0 16px;
}

.container {
    max-width: 1046px;
    margin: 0 auto;
}

.breadcrumbs {
    display: flex;
    align-items: center;
    height: 52px;
    border-bottom: 1px solid #dfdfdf;
    color: #555;
    font-size: 13px;
}

.breadcrumbs b {
    color: #2e2e2e;
}

.crumb {
    width: 8px;
    height: 8px;
    margin: 0 7px;
    stroke-width: 1.5;
    transform: rotate(-90deg);
}

.project {
    display: flex;
    padding-top: 18px;
}

.project-info {
    flex: 1;
    padding-left: 16px;
    color: #555;
}

.project-info h1 {
    display: flex;
    align-items: center;
    gap: 9px;
    margin: 9px 0 4px;
    color: #222;
    font-size: 21px;
    font-weight: 700;
    line-height: 26px;
}

.project-buttons {
    display: flex;
    align-items: flex-start;
    gap: 9px;
    padding-top: 17px;
}

.btn {
    display: flex;
    align-items: center;
    justify-content: center;
    gap: 8px;
    height: 37px;
    padding: 0 11px;
    border: 1px solid #dedede;
    border-radius: 3px;
    background-color: #fff;
    color: #2e2e2e;
    white-space: nowrap;
}

.btn svg {
    color: #555;
}

.btn.short {
    height: 27px;
    padding: 0 13px;
    font-size: 14px;
}

.btn-group {
    display: flex;
}

.btn-group .btn.short {
    padding: 0 12px;
}

.btn-group button {
    border-radius: 3px 0 0 3px;
}

.btn.num {
    border-left: none;
    border-radius: 0 3px 3px 0;
    background-color: #fafafa;
}

.btn.primary {
    padding: 0 13px 0 12px;
    border-color: #174ea6;
    background-color: #1b5fc4;
    color: #fff;
    font-weight: 500;
}

.primary svg {
    color: #fff;
}

.stats {
    display: flex;
    gap: 20px;
    margin-top: 17px;
}

.stats a {
    display: flex;
    align-items: center;
    gap: 5px;
    color: #222;
}

.stats svg {
    color: #555;
}

.stats .blue,
.blue svg {
    color: #1b5aa8;
}

.tree-controls {
    display: flex;
    align-items: center;
    margin-top: 40px;
}

.ref {
    position: relative;
    width: 174px;
}

.ref select {
    display: block;
    width: 100%;
    height: 38px;
    padding: 0 11px;
    border: 1px solid #dedede;
    border-radius: 3px;
    background-color: #fff;
    color: #2e2e2e;
    font: inherit;
    appearance: none;
}

.ref svg {
    position: absolute;
    right: 9px;
    top: 13px;
    color: #b0b0b0;
    pointer-events: none;
}

.path {
    margin-left: 17px;
}

.slash {
    margin: 0 7px 0 11px;
    color: #777;
}

.btn.add {
    gap: 12px;
}

.btn.download {
    gap: 13px;
    padding: 0 13px 0 11px;
}

.tree-actions {
    flex: 1;
    display: flex;
    justify-content: flex-end;
    gap: 5px;
}

.commit {
    display: flex;
    margin-top: 11px;
    padding: 18px;
    height: 83px;
    border: 1px solid #dedede;
    border-radius: 3px;
    background-color: #fafafa;
}

.commit-avatar {
    width: 38px;
    height: 38px;
    border-radius: 50%;
    background-color: #fff;
    color: #a5ef22;
}

.commit-text {
    flex: 1;
    padding-left: 12px;
    line-height: 23px;
}

.commit-title {
    font-weight: 600;
}

.pending {
    width: 26px;
    height: 26px;
    margin: 6px 18px 0 0;
}

.sha {
    display: flex;
    height: 38px;
    border: 1px solid #dedede;
    border-radius: 4px;
}

.sha code {
    padding: 0 11px;
    font-family: "DejaVu Sans Mono", monospace;
    font-size: 15px;
    line-height: 36px;
}

.sha button {
    padding: 0 12px 0 11px;
    border-left: 1px solid #dedede;
    border-radius: 0 4px 4px 0;
    background-color: #fff;
    color: #555;
}

.quick-links {
    display: flex;
    gap: 17px;
    margin-top: 35px;
}

.quick-links .btn {
    gap: 5px;
}

.quick-links .dashed {
    gap: 6px;
    padding: 0 12px;
    border: 1px dashed #aaa;
    color: #555;
}

.devops svg {
    color: #222;
}

.files {
    margin-top: 18px;
    border: 1px solid #dedede;
    border-radius: 3px;
    overflow: hidden;
}

table {
    width: 100%;
    border-collapse: collapse;
}

th,
td {
    height: 46px;
    padding: 0 18px;
    text-align: left;
    font-weight: 400;
}

th {
    padding-top: 2px;
    background-color: #fafafa;
    border-bottom: 1px solid #e8e8e8;
    color: #222;
    font-weight: 500;
}

td {
    color: #555;
}

th.name {
    width: 275px;
}

.updated {
    text-align: right;
}

.file {
    display: flex;
    align-items: center;
    gap: 7px;
    color: #222;
}

.watermark {
    position: absolute;
    right: 42px;
    bottom: 38px;
    color: #fff;
    font-family: "Noto Sans CJK SC", sans-serif;
    font-size: 52px;
    line-height: 70px;
    text-shadow: 3px 3px 0 rgba(90, 90, 90, 0.6);
}
```
